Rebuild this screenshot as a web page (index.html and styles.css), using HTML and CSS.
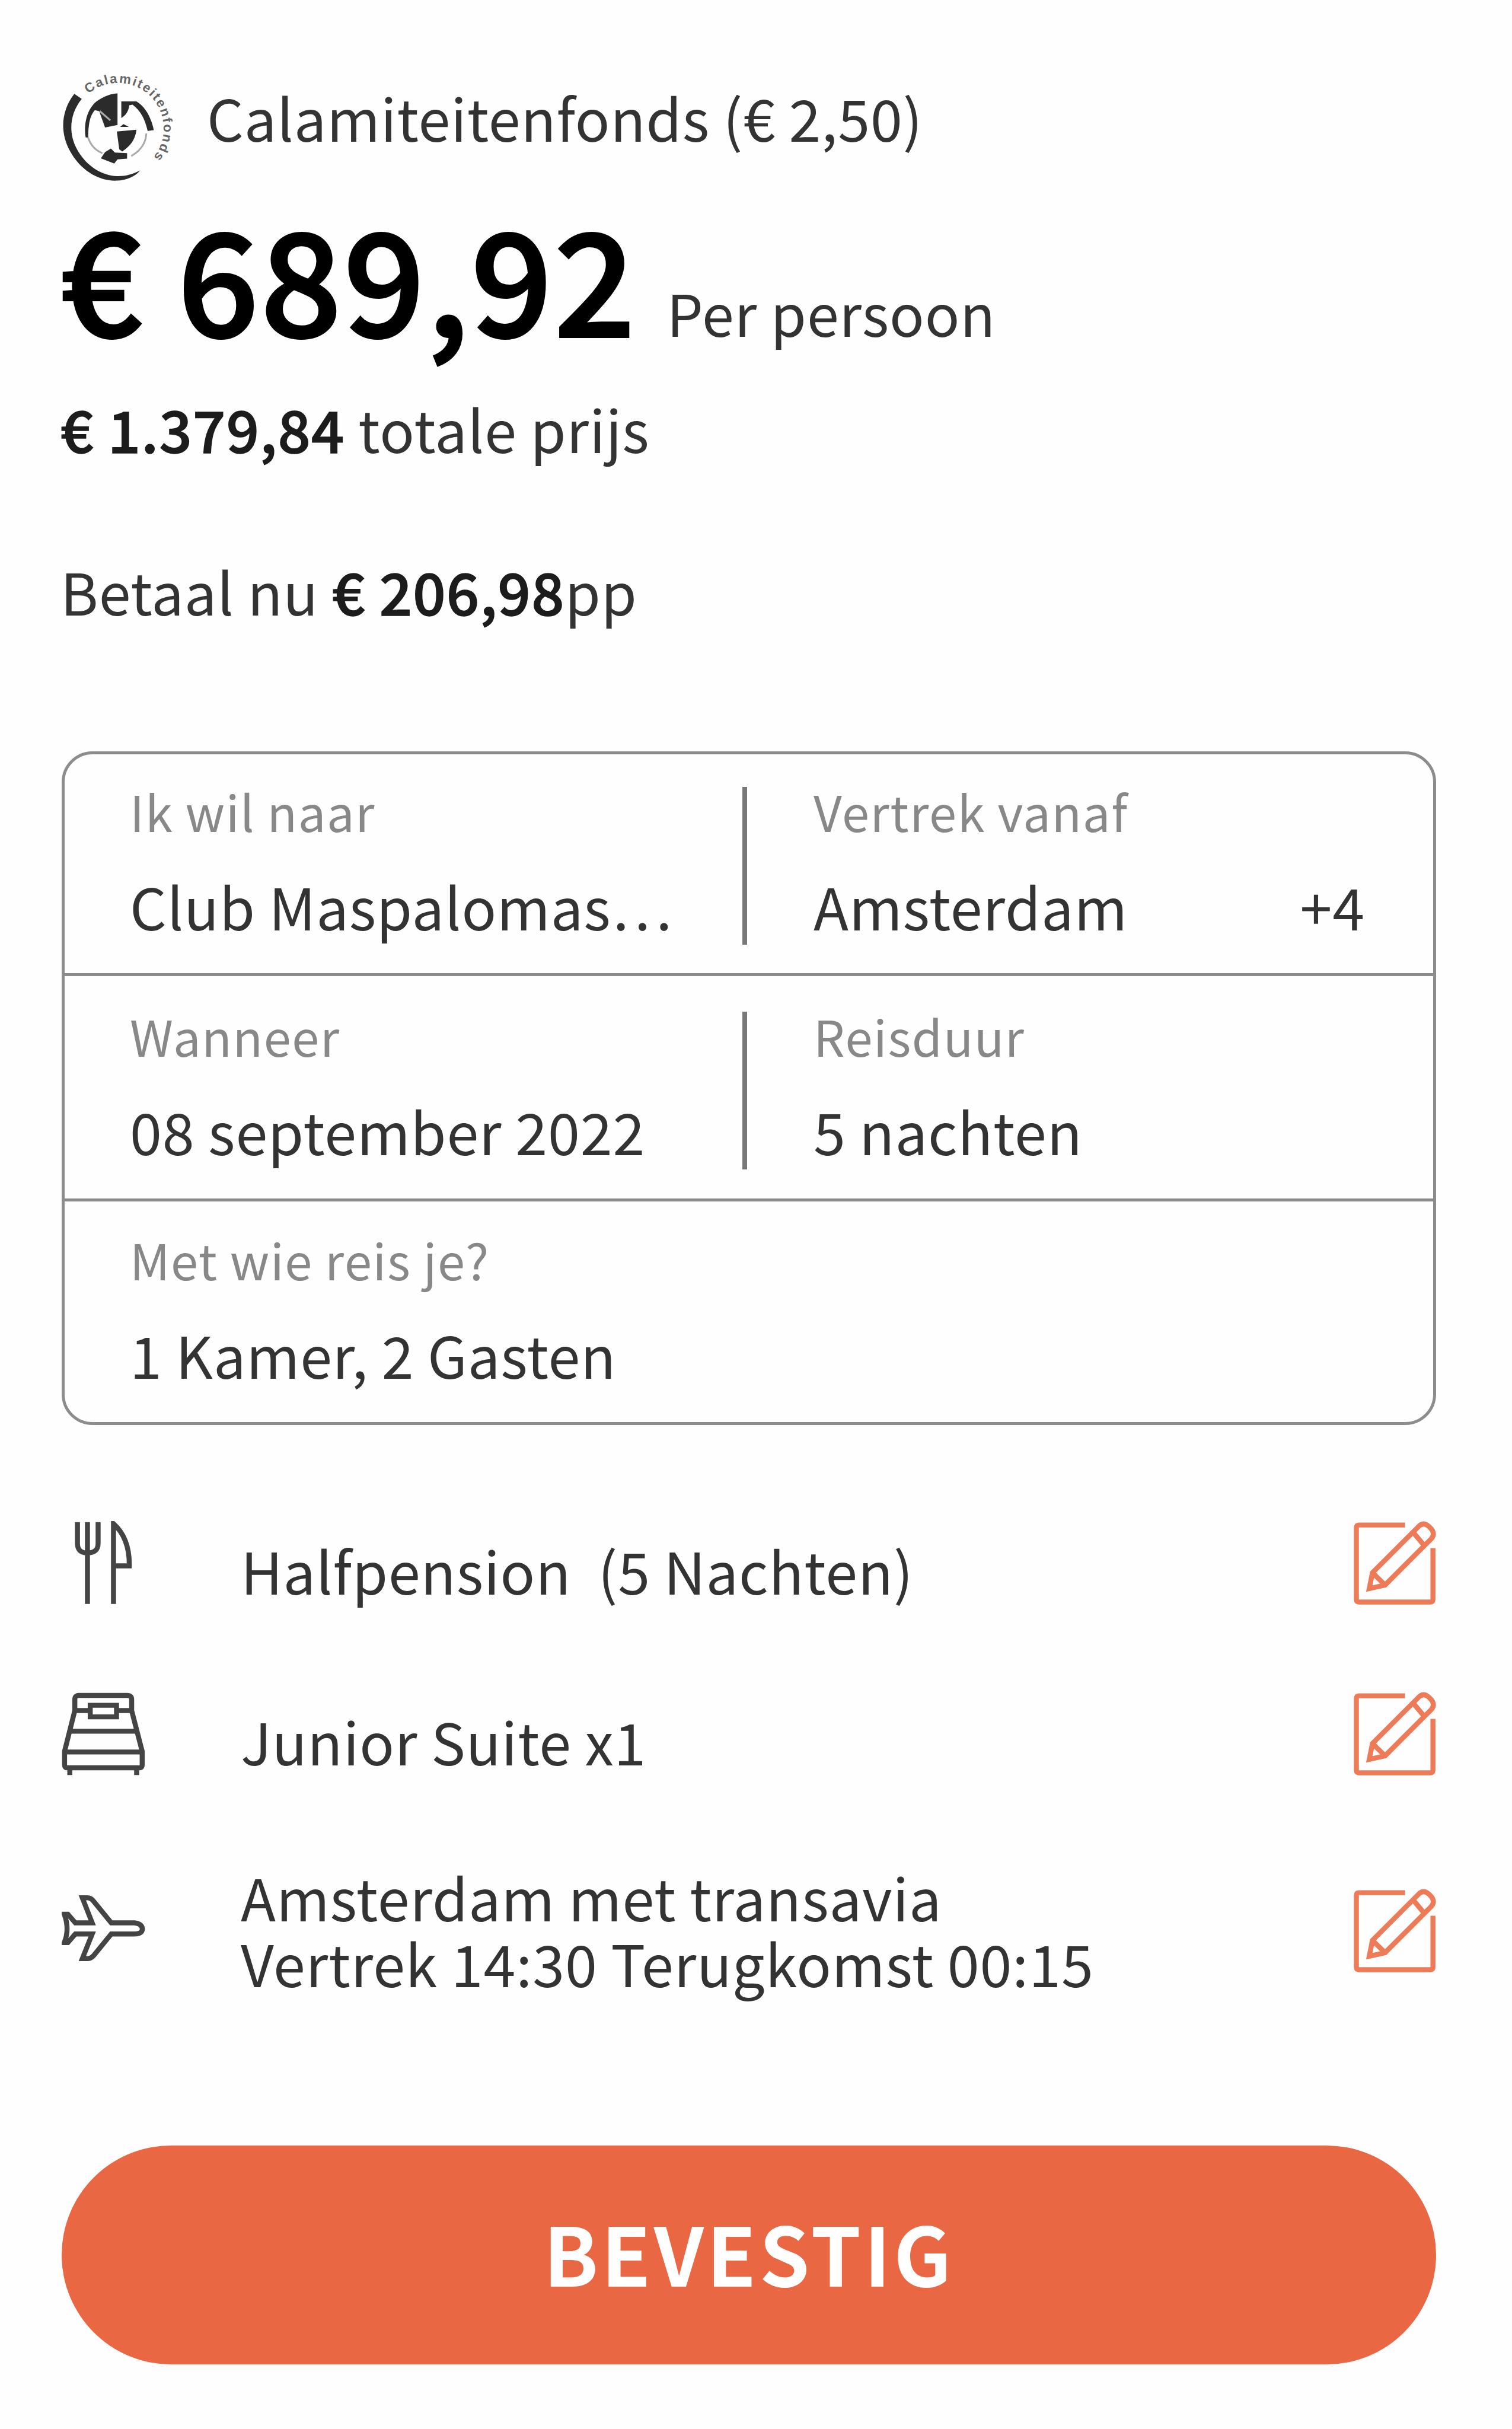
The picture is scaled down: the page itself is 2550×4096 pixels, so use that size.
FILE: index.html
```html
<!DOCTYPE html>
<html lang="nl">
<head>
    <meta charset="UTF-8">
    <meta name="viewport" content="width=device-width, initial-scale=1.0">
    <title>Prijsoverzicht</title>
    <link rel="stylesheet" href="styles.css">
</head>
<body>
    <!-- Shared icons -->
    <svg class="sprite" width="0" height="0">
        <symbol id="edit" viewBox="108 130 640 640">
            <path d="M512 160H160Q142 160 142 178V727Q142 745 160 745H706Q724 745 724 727V335"/>
            <path d="M240 643L264 522L616 170Q652 134 692 170L712 190Q742 228 712 264L360 616Z"/>
            <path d="M264 522L360 616M574 216L660 318"/>
        </symbol>
    </svg>

    <div class="summary">
        <div class="fund">
            <svg class="fund-logo" viewBox="110 90 880 860">
                <path d="M205 268L262 306C170 420 160 560 220 680C290 815 410 890 530 896C590 898 650 884 708 852C670 900 600 930 530 930C390 935 250 850 170 700C90 550 110 390 205 268Z"/>
                <path d="M375 325C440 280 490 266 535 264V505L440 524L395 400L362 392C330 430 312 480 312 600H292C276 500 300 385 375 325Z"/>
                <path d="M564 325H680C745 365 790 440 812 545L765 550C745 460 710 395 650 350L625 355C620 400 600 430 564 452ZM555 520L580 498L622 520Z"/>
                <path d="M530 555L680 542C670 620 630 670 570 708L548 690ZM408 760L440 712L485 685L515 716L608 720V762L535 768L510 800Z"/>
                <path class="thin" d="M310 600Q340 690 420 720M640 742Q750 680 755 570M400 400L480 470"/>
                <path class="track" id="ring" d="M313 268A348 348 0 0 1 800 763"/>
                <text><textPath href="#ring" textLength="1030">Calamiteitenfonds</textPath></text>
            </svg>
            <span class="fund-text">Calamiteitenfonds (€ 2,50)</span>
        </div>

        <div class="price"><strong>€ 689,92</strong> <span>Per persoon</span></div>
        <div class="total"><strong>€ 1.379,84</strong> totale prijs</div>
        <div class="deposit">Betaal nu <strong>€ 206,98</strong>pp</div>

        <div class="trip">
            <div class="trip-row">
                <div class="field">
                    <div class="label">Ik wil naar</div>
                    <div class="value">Club Maspalomas…</div>
                </div>
                <div class="field">
                    <div class="label">Vertrek vanaf</div>
                    <div class="value"><span>Amsterdam</span><span>+4</span></div>
                </div>
            </div>
            <div class="trip-row">
                <div class="field">
                    <div class="label">Wanneer</div>
                    <div class="value">08 september 2022</div>
                </div>
                <div class="field">
                    <div class="label">Reisduur</div>
                    <div class="value">5 nachten</div>
                </div>
            </div>
            <div class="trip-row">
                <div class="field">
                    <div class="label">Met wie reis je?</div>
                    <div class="value">1 Kamer, 2 Gasten</div>
                </div>
            </div>
        </div>

        <div class="option">
            <svg class="icon" viewBox="108 130 640 640">
                <path d="M228 138V300Q228 372 304 372Q385 372 385 300V138M304 138V760M502 760V150Q625 260 622 470H502"/>
            </svg>
            <div class="option-text">Halfpension&nbsp; (5 Nachten)</div>
            <svg class="icon edit"><use href="#edit"/></svg>
        </div>
        <div class="option">
            <svg class="icon" viewBox="108 108 640 640">
                <path d="M208 250V165Q208 135 238 135H606Q640 135 640 165V250L720 560V665Q720 685 700 685H150Q130 685 130 665V560L208 250M208 250H325M525 250H640M325 210H525V298H325ZM178 407H675M130 565H720M170 685V740M678 685V740"/>
            </svg>
            <div class="option-text">Junior Suite x1</div>
            <svg class="icon edit"><use href="#edit"/></svg>
        </div>
        <div class="option flight">
            <svg class="icon" viewBox="108 51 640 640">
                <path d="M128 245H155L212 310H340L265 120H305Q330 120 350 145L485 310H660Q718 315 722 357Q718 395 660 395H485L350 560Q330 582 305 582H265L340 395H212L155 460H128Q170 357 128 245Z"/>
            </svg>
            <div class="option-text">Amsterdam met transavia<br>Vertrek 14:30 Terugkomst 00:15</div>
            <svg class="icon edit"><use href="#edit"/></svg>
        </div>

        <button class="confirm">BEVESTIG</button>
    </div>
</body>
</html>
```
FILE: styles.css
```css
* {
    box-sizing: border-box;
}

body {
    margin: 0;
    background: #fefefe;
    color: #333;
    font-family: "Noto Sans CJK SC", "Noto Sans", sans-serif;
    font-size: 97px;
    line-height: 120px;
    letter-spacing: 0.9px;
}

.sprite {
    display: block;
}

.summary {
    padding: 119px 128px 0 104px;
}

/* Price block */
.fund {
    display: flex;
    align-items: center;
    gap: 50px;
    height: 190px;
}

.fund-logo {
    width: 195px;
    height: 190px;
    fill: #2b2b2b;
}

.fund-logo text {
    font: bold 100px "Liberation Sans", sans-serif;
    letter-spacing: 0;
    fill: #666;
}

.fund-logo .track {
    fill: none;
}

.fund-logo .thin {
    fill: none;
    stroke: #aaa;
    stroke-width: 14;
}

.fund-text {
    padding-bottom: 35px;
}

strong {
    font-weight: 500;
    letter-spacing: 1.3px;
    color: #1c1c1c;
    -webkit-text-stroke: 1.5px #1c1c1c;
}

.price {
    margin: 35px 0 0 -2px;
    height: 240px;
    line-height: 240px;
}

.price strong {
    margin-right: 27px;
    font-size: 240px;
    letter-spacing: 3.3px;
    color: #000;
    -webkit-text-stroke: 4px #000;
}

.total {
    margin: 78px 0 0 -2px;
}

.deposit {
    margin: 154px 0 0 -2px;
}

/* Trip details */
.trip {
    margin-top: 211px;
    border: 5px solid #8c8c8c;
    border-radius: 52px;
}

.trip-row {
    display: flex;
    height: 380px;
    padding: 50px 115px 0 110px;
    border-bottom: 5px solid #8c8c8c;
}

.trip-row:first-child {
    height: 374px;
    padding-top: 45px;
}

.trip-row:last-child {
    height: 372px;
    padding-top: 47px;
    border-bottom: none;
}

.field {
    flex: 1;
}

.field:first-child:not(:last-child) {
    flex: none;
    width: 1041px;
    height: 266px;
    margin: 10px 112px 0 0;
    border-right: 8px solid #777;
}

.field:first-child:not(:last-child) .label {
    margin-top: -10px;
}

.label {
    font-size: 83px;
    line-height: 100px;
    letter-spacing: 1.6px;
    color: #888;
}

.value {
    display: flex;
    justify-content: space-between;
    margin-top: 50px;
    white-space: nowrap;
}

/* Options */
.option {
    display: flex;
    align-items: center;
    height: 142px;
    margin-top: 146px;
}

.trip + .option {
    margin-top: 162px;
}

.option.flight {
    margin-top: 190px;
}

.icon {
    flex: none;
    width: 142px;
    height: 142px;
    fill: none;
    stroke: #444;
    stroke-width: 38;
}

.icon.edit {
    margin-left: auto;
    stroke: #ee7b58;
}

.option-text {
    margin-left: 160px;
    padding-top: 20px;
    line-height: 111px;
}

.flight .option-text {
    padding-top: 0;
    margin-top: -6px;
}

.confirm {
    display: block;
    width: 100%;
    height: 369px;
    margin-top: 291px;
    padding: 0 0 13px;
    border: none;
    border-radius: 185px;
    background: #e96843;
    color: #fff;
    font: bold 136px "Noto Sans CJK SC", "Noto Sans", sans-serif;
    letter-spacing: 5px;
}
```
